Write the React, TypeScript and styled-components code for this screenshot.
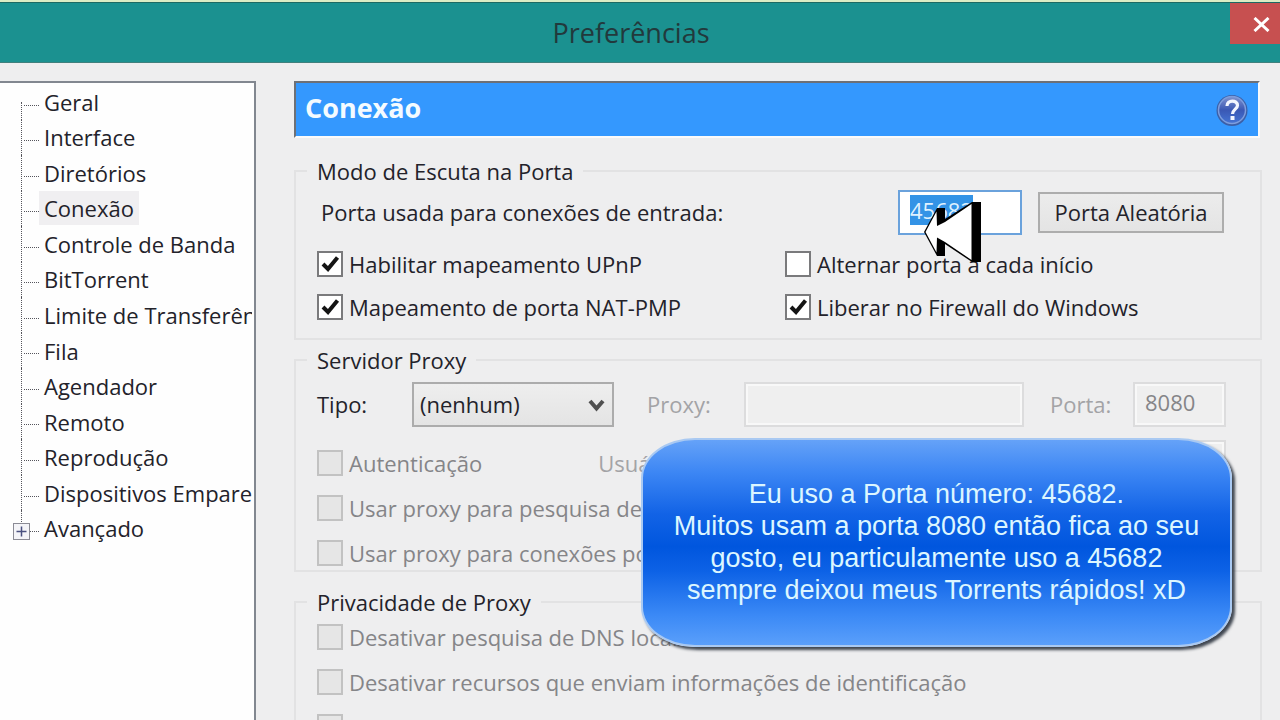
import React, { useEffect, useRef } from 'react';
import styled, { createGlobalStyle, css } from 'styled-components';

const Global = createGlobalStyle`
  * { box-sizing: border-box; }
  html, body { margin: 0; height: 100%; }
  body { overflow: hidden; background: #eeeeef; }
  body, button, input, select {
    font-family: "Open Sans", "Noto Sans", sans-serif;
    font-size: 22px;
    line-height: 30px;
    color: #23222a;
  }
  #root { height: 100%; }
`;

const Window = styled.div`
  position: relative;
  display: flex;
  flex-direction: column;
  height: 100vh;
  overflow: hidden;
  border-top: 2px solid #dcecc4;
`;

const TitleBar = styled.header`
  display: flex;
  flex: none;
  align-items: flex-start;
  height: 61px;
  border-top: 1px solid #1d6a63;
  border-bottom: 1px solid #40807d;
  background: #1b9190;
`;

const Title = styled.h1`
  flex: 1;
  margin: 0;
  padding-left: 32px;
  font-size: 27px;
  font-weight: 400;
  line-height: 60px;
  text-align: center;
  color: #22393c;
`;

const CloseButton = styled.button`
  display: flex;
  align-items: center;
  justify-content: flex-end;
  width: 50px;
  height: 41px;
  padding: 2px 10px 0 0;
  border: 0;
  background: #c75050;
`;

const Body = styled.div`
  display: flex;
  flex: 1;
  gap: 38px;
  min-height: 0;
  padding-top: 18px;
`;

const Sidebar = styled.nav`
  flex: none;
  width: 256px;
  overflow: hidden;
  border: solid #828790;
  border-width: 2px 2px 0 0;
  background: #fefefe;
`;

const Tree = styled.ul`
  display: grid;
  grid-auto-rows: 1fr;
  min-height: 463px;
  margin: 0 2px 0 0;
  padding: 1px 0 0 21px;
  overflow: hidden;
  list-style: none;
`;

const Branch = styled.li<{ $edge?: 'first' | 'last' }>`
  position: relative;
  display: flex;
  align-items: center;
  min-width: 0;
  white-space: nowrap;
  &::before {
    content: '';
    position: absolute;
    left: 0;
    top: ${(p) => (p.$edge === 'first' ? '50%' : '0')};
    bottom: ${(p) => (p.$edge === 'last' ? '50%' : '0')};
    border-left: 1px dotted #55555c;
  }
  &::after {
    content: '';
    position: absolute;
    left: 3px;
    top: 58%;
    width: 15px;
    border-top: 1px dotted #55555c;
  }
`;

const TreeLink = styled.a<{ $current?: boolean }>`
  margin-left: 18px;
  padding: 0 5px;
  line-height: 34px;
  color: inherit;
  text-decoration: none;
  background: ${(p) => (p.$current ? '#f0eff1' : 'transparent')};
`;

const Expander = styled.button`
  position: absolute;
  z-index: 1;
  left: -8px;
  top: 13px;
  display: flex;
  align-items: center;
  justify-content: center;
  width: 17px;
  height: 17px;
  padding: 0;
  border: 1px solid #8b8b95;
  background: #f4f4f8;
`;

const Main = styled.main`
  flex: 1;
  min-width: 0;
  padding-right: 18px;
`;

const Banner = styled.div`
  display: flex;
  align-items: center;
  justify-content: space-between;
  height: 57px;
  margin: 0 2px 18px 0;
  padding: 0 10px 0 9px;
  border: 2px solid #6d7076;
  border-right-color: #fafafa;
  border-bottom-color: #fafafa;
  background: #3498fe;
`;

const BannerTitle = styled.h2`
  margin: 0;
  padding-bottom: 4px;
  font-size: 27px;
  font-weight: 700;
  color: #f4fbff;
`;

const HelpButton = styled.button`
  display: flex;
  padding: 0;
  border: 0;
  background: none;
`;

const Group = styled.fieldset<{ $after: number }>`
  min-width: 0;
  margin: 0 0 ${(p) => p.$after}px;
  padding: 0 34px 0 21px;
  border: 2px solid #e2e2e3;
`;

const Legend = styled.legend`
  margin-left: -10px;
  padding: 0 10px;
  line-height: 30px;
`;

const PortRow = styled.div`
  display: flex;
  align-items: center;
  height: 52px;
  padding-right: 2px;
`;

const Columns = styled.div`
  display: grid;
  grid-template-columns: 468px 1fr;
  row-gap: 13px;
  padding: 11px 0 16px;
`;

const ProxyRow = styled.div`
  display: flex;
  align-items: center;
  height: 58px;
`;

const AuthRow = styled.div`
  display: flex;
  align-items: center;
  height: 45px;
  margin: 7px 0 8px;
`;

const Stack = styled.div<{ $top?: number; $bottom?: number }>`
  display: grid;
  row-gap: 15px;
  padding: ${(p) => p.$top ?? 0}px 0 ${(p) => p.$bottom ?? 2}px;
`;

const PortLabel = styled.label`
  flex: 1;
  padding-left: 4px;
`;

const PortInput = styled.input`
  width: 124px;
  height: 45px;
  margin-right: 16px;
  padding: 0 10px 4px;
  border: 2px solid #6aa2dc;
  outline: 0;
  background: #fff;
  &::selection { color: #dff1ff; background: #3393e6; }
`;

const RandomButton = styled.button`
  width: 186px;
  height: 41px;
  padding: 0;
  border: 2px solid #adadad;
  background: linear-gradient(#ececec, #e4e4e4);
`;

const Check = styled.label<{ $disabled?: boolean }>`
  position: relative;
  display: flex;
  align-items: center;
  gap: 6px;
  min-height: 30px;
  white-space: nowrap;
  color: ${(p) => (p.$disabled ? '#858588' : 'inherit')};
  svg {
    position: absolute;
    left: 0;
  }
`;

const Box = styled.input`
  appearance: none;
  flex: none;
  width: 26px;
  height: 26px;
  margin: 0;
  border: 2px solid #7a7a7c;
  background: #fff;
  &:disabled {
    border-color: #c2c2c2;
    background: #e6e6e6;
  }
`;

const FieldLabel = styled.label<{ $width: number; $indent?: number; $faded?: boolean }>`
  flex: none;
  width: ${(p) => p.$width}px;
  padding-left: ${(p) => p.$indent ?? 0}px;
  color: ${(p) => (p.$faded ? '#a3a3a6' : 'inherit')};
`;

const SelectWrap = styled.div`
  position: relative;
  flex: none;
  width: 202px;
  margin-right: 33px;
  svg {
    position: absolute;
    right: 9px;
    top: 17px;
    pointer-events: none;
  }
`;

const Select = styled.select`
  appearance: none;
  display: block;
  width: 100%;
  height: 45px;
  padding: 0 6px;
  border: 2px solid #acacac;
  border-radius: 0;
  background: linear-gradient(#eeeeee, #e4e4e4);
`;

const disabledField = css`
  height: 45px;
  border: 2px solid #dcdcdd;
  background: #efefef;
  outline: 2px solid #f8f8f8;
  outline-offset: -4px;
`;

const WideInput = styled.input`
  flex: 1;
  min-width: 0;
  ${disabledField}
`;

const SmallInput = styled.input`
  flex: none;
  width: 93px;
  padding: 0 10px 4px;
  color: #858588;
  ${disabledField}
`;

const AuthField = styled.div`
  display: flex;
  align-items: center;
  flex: 1;
  gap: 12px;
  min-width: 0;
  margin-left: 24px;
  &:first-of-type { margin-left: 116px; }
`;

const Note = styled.aside`
  position: absolute;
  right: 48px;
  top: 436px;
  display: flex;
  align-items: center;
  justify-content: center;
  width: 591px;
  height: 209px;
  padding-bottom: 2px;
  border: 2px solid #a9c9f2;
  border-radius: 54px / 40px;
  background: linear-gradient(#65a2f8 0%, #3c86f4 16%, #1263e6 36%, #0056de 52%, #0d62e6 64%, #3c8af6 86%, #5a9ffb 100%);
  box-shadow: 3px 3px 3px #3f4650;
  font-family: "Liberation Sans", Arial, sans-serif;
  font-size: 27px;
  line-height: 32px;
  text-align: center;
  white-space: pre-line;
  color: #dcf6ff;
`;

const Pointer = styled.svg`
  position: absolute;
  right: 297px;
  top: 198px;
  pointer-events: none;
`;

const sections = [
  'Geral', 'Interface', 'Diretórios', 'Conexão', 'Controle de Banda', 'BitTorrent',
  'Limite de Transferência', 'Fila', 'Agendador', 'Remoto', 'Reprodução',
  'Dispositivos Emparelhados', 'Avançado',
];

const noteText = `Eu uso a Porta número: 45682.
Muitos usam a porta 8080 então fica ao seu
gosto, eu particulamente uso a 45682
sempre deixou meus Torrents rápidos! xD`;

function CheckField({ label, checked, disabled }: { label: string; checked?: boolean; disabled?: boolean }) {
  return (
    <Check $disabled={disabled}>
      <Box type="checkbox" defaultChecked={checked} disabled={disabled} />
      {checked && (
        <svg width="26" height="26" viewBox="0 0 26 26" aria-hidden="true">
          <path d="M6 13 11 18 20.500 6.500" fill="none" stroke="#141414" strokeWidth="4" />
        </svg>
      )}
      {label}
    </Check>
  );
}

export default function App() {
  const port = useRef<HTMLInputElement>(null);
  useEffect(() => {
    port.current?.focus();
    port.current?.select();
  }, []);

  return (
    <Window>
      <Global />
      <TitleBar>
        <Title>Preferências</Title>
        <CloseButton aria-label="Fechar">
          <svg width="17" height="15" viewBox="0 0 17 15">
            <path d="M1.500 1 15.500 14M15.500 1 1.500 14" stroke="#fff" strokeWidth="3" />
          </svg>
        </CloseButton>
      </TitleBar>
      <Body>
        <Sidebar>
          <Tree>
            {sections.map((name, i) => (
              <Branch key={name} $edge={i === 0 ? 'first' : i === sections.length - 1 ? 'last' : undefined}>
                {name === 'Avançado' && (
                  <Expander aria-label="Expandir Avançado">
                    <svg width="11" height="11" viewBox="0 0 11 11">
                      <path d="M5.500 0.500V10.500M0.500 5.500H10.500" stroke="#4a5080" strokeWidth="1.500" />
                    </svg>
                  </Expander>
                )}
                <TreeLink href="#" $current={name === 'Conexão'}>{name}</TreeLink>
              </Branch>
            ))}
          </Tree>
        </Sidebar>
        <Main>
          <Banner>
            <BannerTitle>Conexão</BannerTitle>
            <HelpButton aria-label="Ajuda">
              <svg width="32" height="32" viewBox="0 0 32 32">
                <defs>
                  <linearGradient id="help" x1="0" y1="0" x2="0" y2="1">
                    <stop offset="0" stopColor="#8093cf" />
                    <stop offset="0.5" stopColor="#3a58b4" />
                    <stop offset="1" stopColor="#4474d4" />
                  </linearGradient>
                </defs>
                <circle cx="16" cy="16.500" r="15.500" fill="#3c5fa6" />
                <circle cx="16" cy="16" r="13.500" fill="url(#help)" stroke="#7d9ddd" strokeWidth="1.500" />
                <path d="M11 12C11 5.500 21.500 5.500 21.500 11.500C21.500 15 16.500 15.500 16.500 20" fill="none" stroke="#f2f6ff" strokeWidth="3.200" />
                <rect x="14.500" y="22" width="4" height="4" fill="#f2f6ff" />
              </svg>
            </HelpButton>
          </Banner>
          <Group $after={5}>
            <Legend>Modo de Escuta na Porta</Legend>
            <PortRow>
              <PortLabel htmlFor="port">Porta usada para conexões de entrada:</PortLabel>
              <PortInput id="port" ref={port} defaultValue="45682" />
              <RandomButton>Porta Aleatória</RandomButton>
            </PortRow>
            <Columns>
              <CheckField label="Habilitar mapeamento UPnP" checked />
              <CheckField label="Alternar porta a cada início" />
              <CheckField label="Mapeamento de porta NAT-PMP" checked />
              <CheckField label="Liberar no Firewall do Windows" checked />
            </Columns>
          </Group>
          <Group $after={15}>
            <Legend>Servidor Proxy</Legend>
            <ProxyRow>
              <FieldLabel htmlFor="type" $width={95}>Tipo:</FieldLabel>
              <SelectWrap>
                <Select id="type"><option>(nenhum)</option></Select>
                <svg width="17" height="13" viewBox="0 0 17 13">
                  <path d="M2 2 8.500 9.500 15 2" fill="none" stroke="#505050" strokeWidth="4" />
                </svg>
              </SelectWrap>
              <FieldLabel htmlFor="proxy" $width={97} $faded>Proxy:</FieldLabel>
              <WideInput id="proxy" disabled />
              <FieldLabel htmlFor="proxyPort" $width={109} $indent={26} $faded>Porta:</FieldLabel>
              <SmallInput id="proxyPort" defaultValue="8080" disabled />
            </ProxyRow>
            <AuthRow>
              <CheckField label="Autenticação" disabled />
              <AuthField>
                <FieldLabel htmlFor="user" $width={86} $faded>Usuário:</FieldLabel>
                <WideInput id="user" disabled />
              </AuthField>
              <AuthField>
                <FieldLabel htmlFor="password" $width={72} $faded>Senha:</FieldLabel>
                <WideInput id="password" type="password" disabled />
              </AuthField>
            </AuthRow>
            <Stack>
              <CheckField label="Usar proxy para pesquisa de" disabled />
              <CheckField label="Usar proxy para conexões ponto" disabled />
            </Stack>
          </Group>
          <Group $after={5}>
            <Legend>Privacidade de Proxy</Legend>
            <Stack $top={5} $bottom={15}>
              <CheckField label="Desativar pesquisa de DNS local" disabled />
              <CheckField label="Desativar recursos que enviam informações de identificação" disabled />
              <CheckField label="" disabled />
            </Stack>
          </Group>
        </Main>
      </Body>
      <Note>{noteText}</Note>
      <Pointer width="60" height="64" viewBox="0 0 60 64" aria-hidden="true">
        <path d="M1 32 14 8H22V19L49 2H58V62H49L22 44V56H14Z" fill="#000" />
        <path d="M2.500 32 13.500 11.500 14 26 22 22 48.500 4V60L22 42 14 37.500 13.500 52.500Z" fill="#fff" />
      </Pointer>
    </Window>
  );
}
